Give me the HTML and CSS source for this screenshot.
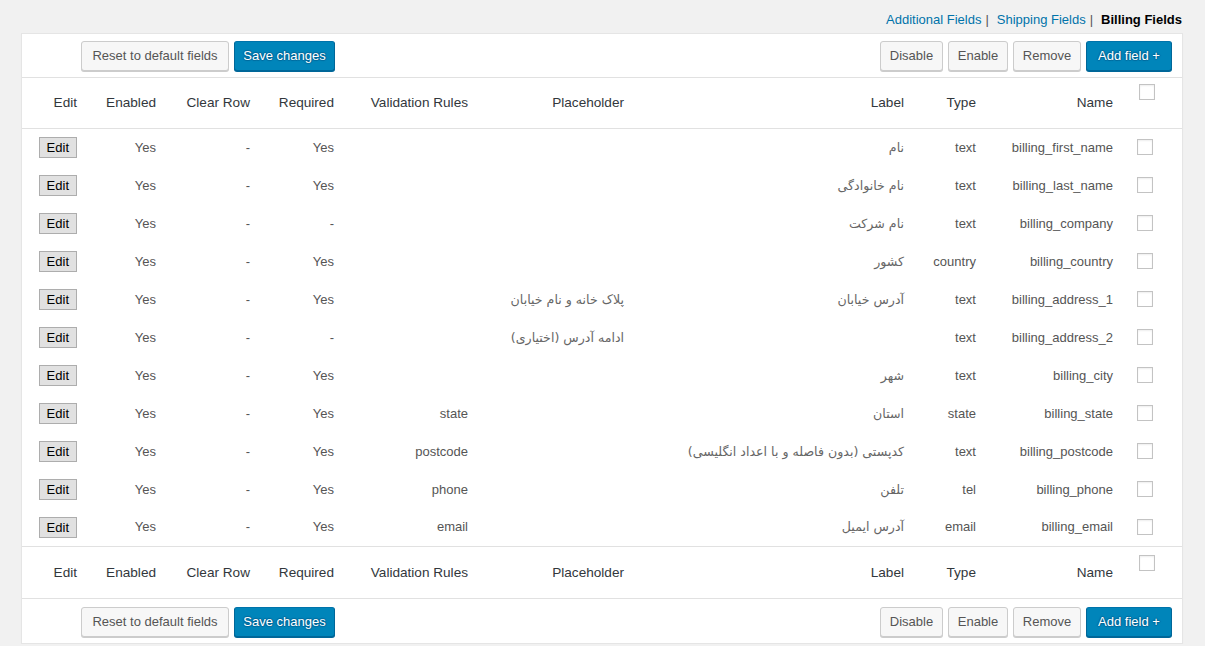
FILE: index.html
```html
<!DOCTYPE html>
<html lang="en">
<head>
<meta charset="utf-8">
<title>Billing Fields</title>
<link rel="stylesheet" href="styles.css">
</head>
<body>
<div class="tabs">
  <a class="tab" href="#">Additional Fields</a><span class="sep">|</span><a class="tab" href="#">Shipping Fields</a><span class="sep">|</span><b class="tab-current">Billing Fields</b>
</div>
<div class="panel">
  <div class="toolbar">
    <div class="group group-left">
      <button class="btn w-reset">Reset to default fields</button>
      <button class="btn btn-primary w-save">Save changes</button>
    </div>
    <div class="group group-right">
      <button class="btn w-disable">Disable</button>
      <button class="btn w-enable">Enable</button>
      <button class="btn w-remove">Remove</button>
      <button class="btn btn-primary w-add">Add field +</button>
    </div>
  </div>
  <table class="fields">
    <colgroup>
      <col class="c-edit"><col class="c-enabled"><col class="c-clear"><col class="c-req"><col class="c-valid"><col class="c-ph"><col class="c-label"><col class="c-type"><col class="c-name"><col class="c-check">
    </colgroup>
    <thead>
      <tr>
        <th>Edit</th><th>Enabled</th><th>Clear Row</th><th>Required</th><th>Validation Rules</th><th>Placeholder</th><th>Label</th><th>Type</th><th>Name</th><th class="check head-check"><input type="checkbox" class="cb"></th>
      </tr>
    </thead>
    <tbody>
      <tr><td><button class="edit">Edit</button></td><td>Yes</td><td>-</td><td>Yes</td><td></td><td></td><td class="fa" dir="rtl">نام</td><td>text</td><td>billing_first_name</td><td class="check"><input type="checkbox" class="cb"></td></tr>
      <tr><td><button class="edit">Edit</button></td><td>Yes</td><td>-</td><td>Yes</td><td></td><td></td><td class="fa" dir="rtl">نام خانوادگی</td><td>text</td><td>billing_last_name</td><td class="check"><input type="checkbox" class="cb"></td></tr>
      <tr><td><button class="edit">Edit</button></td><td>Yes</td><td>-</td><td>-</td><td></td><td></td><td class="fa" dir="rtl">نام شرکت</td><td>text</td><td>billing_company</td><td class="check"><input type="checkbox" class="cb"></td></tr>
      <tr><td><button class="edit">Edit</button></td><td>Yes</td><td>-</td><td>Yes</td><td></td><td></td><td class="fa" dir="rtl">کشور</td><td>country</td><td>billing_country</td><td class="check"><input type="checkbox" class="cb"></td></tr>
      <tr><td><button class="edit">Edit</button></td><td>Yes</td><td>-</td><td>Yes</td><td></td><td class="fa" dir="rtl">پلاک خانه و نام خیابان</td><td class="fa" dir="rtl">آدرس خیابان</td><td>text</td><td>billing_address_1</td><td class="check"><input type="checkbox" class="cb"></td></tr>
      <tr><td><button class="edit">Edit</button></td><td>Yes</td><td>-</td><td>-</td><td></td><td class="fa" dir="rtl">ادامه آدرس (اختیاری)</td><td></td><td>text</td><td>billing_address_2</td><td class="check"><input type="checkbox" class="cb"></td></tr>
      <tr><td><button class="edit">Edit</button></td><td>Yes</td><td>-</td><td>Yes</td><td></td><td></td><td class="fa" dir="rtl">شهر</td><td>text</td><td>billing_city</td><td class="check"><input type="checkbox" class="cb"></td></tr>
      <tr><td><button class="edit">Edit</button></td><td>Yes</td><td>-</td><td>Yes</td><td>state</td><td></td><td class="fa" dir="rtl">استان</td><td>state</td><td>billing_state</td><td class="check"><input type="checkbox" class="cb"></td></tr>
      <tr><td><button class="edit">Edit</button></td><td>Yes</td><td>-</td><td>Yes</td><td>postcode</td><td></td><td class="fa" dir="rtl">کدپستی (بدون فاصله و با اعداد انگلیسی)</td><td>text</td><td>billing_postcode</td><td class="check"><input type="checkbox" class="cb"></td></tr>
      <tr><td><button class="edit">Edit</button></td><td>Yes</td><td>-</td><td>Yes</td><td>phone</td><td></td><td class="fa" dir="rtl">تلفن</td><td>tel</td><td>billing_phone</td><td class="check"><input type="checkbox" class="cb"></td></tr>
      <tr><td><button class="edit">Edit</button></td><td>Yes</td><td>-</td><td>Yes</td><td>email</td><td></td><td class="fa" dir="rtl">آدرس ایمیل</td><td>email</td><td>billing_email</td><td class="check"><input type="checkbox" class="cb"></td></tr>
    </tbody>
    <tfoot>
      <tr>
        <th>Edit</th><th>Enabled</th><th>Clear Row</th><th>Required</th><th>Validation Rules</th><th>Placeholder</th><th>Label</th><th>Type</th><th>Name</th><th class="check head-check foot-check"><input type="checkbox" class="cb"></th>
      </tr>
    </tfoot>
  </table>
  <div class="toolbar toolbar-bottom">
    <div class="group group-left">
      <button class="btn w-reset">Reset to default fields</button>
      <button class="btn btn-primary w-save">Save changes</button>
    </div>
    <div class="group group-right">
      <button class="btn w-disable">Disable</button>
      <button class="btn w-enable">Enable</button>
      <button class="btn w-remove">Remove</button>
      <button class="btn btn-primary w-add">Add field +</button>
    </div>
  </div>
</div>
</body>
</html>
```

FILE: styles.css
```css
html, body {
  margin: 0;
  padding: 0;
}
body {
  background: #f1f1f1;
  font-family: "Liberation Sans", Arial, sans-serif;
  font-size: 13px;
  color: #444;
}
.tabs {
  height: 22px;
  padding: 11px 23px 0 0;
  line-height: 18px;
  text-align: right;
  font-size: 13px;
}
.tab {
  color: #0073aa;
  text-decoration: none;
}
.sep {
  color: #555;
  margin: 0 8px 0 4px;
}
.tab-current {
  color: #000;
  font-weight: bold;
}
.panel {
  margin: 0 22px 0 21px;
  background: #fff;
  border: 1px solid #e5e5e5;
  box-shadow: 0 1px 1px rgba(0,0,0,.04);
}
.toolbar {
  display: flex;
  justify-content: space-between;
  align-items: center;
  padding: 7px 10px 6px 59px;
  border-bottom: 1px solid #e1e1e1;
}
.toolbar-bottom {
  border-bottom: 0;
  padding: 8px 10px 6px 59px;
}
.group {
  display: flex;
  gap: 5px;
}
.btn {
  height: 30px;
  margin: 0;
  padding: 0 0 1px;
  font-family: "Liberation Sans", Arial, sans-serif;
  font-size: 13px;
  line-height: 28px;
  color: #555;
  background: #f7f7f7;
  border: 1px solid #ccc;
  border-radius: 3px;
  box-shadow: 0 1px 0 #ccc;
  white-space: nowrap;
  text-align: center;
  cursor: pointer;
}
.w-reset { width: 148px; }
.w-save { width: 101px; }
.w-disable { width: 63px; }
.w-enable { width: 60px; }
.w-remove { width: 68px; }
.w-add { width: 86px; }
.btn-primary {
  color: #fff;
  background: #0085ba;
  border-color: #0073aa #006799 #006799;
  box-shadow: 0 1px 0 #006799;
  text-shadow: 0 -1px 1px #006799, 1px 0 1px #006799, 0 1px 1px #006799, -1px 0 1px #006799;
}
.fields {
  width: 100%;
  table-layout: fixed;
  border-collapse: collapse;
  border-spacing: 0;
}
.c-edit { width: 65px; }
.c-enabled { width: 79px; }
.c-clear { width: 94px; }
.c-req { width: 84px; }
.c-valid { width: 134px; }
.c-ph { width: 156px; }
.c-label { width: 280px; }
.c-type { width: 72px; }
.c-name { width: 137px; }
.c-check { width: 59px; }
.fields thead tr {
  height: 50px;
}
.fields tfoot tr {
  height: 52px;
}
.fields tbody tr {
  height: 38px;
}
.fields th {
  padding: 0 10px 0 0;
  font-weight: normal;
  font-size: 13.6px;
  color: #32373c;
  text-align: right;
  vertical-align: middle;
  white-space: nowrap;
}
.fields thead th {
  border-bottom: 1px solid #e1e1e1;
}
.fields tfoot th {
  border-top: 1px solid #e1e1e1;
  border-bottom: 1px solid #e1e1e1;
}
.fields td {
  padding: 0 10px 0 0;
  color: #555;
  text-align: right;
  vertical-align: middle;
  white-space: nowrap;
  font-size: 13px;
}
.fields td.fa {
  font-family: "DejaVu Sans", "Noto Sans", sans-serif;
  font-size: 12.6px;
  color: #666;
}
.fields .check {
  text-align: left;
  padding: 0 0 0 14px;
}
.fields .head-check {
  vertical-align: top;
  padding: 6px 0 0 16px;
}
.fields .foot-check {
  padding-top: 8px;
}
.cb {
  -webkit-appearance: none;
  appearance: none;
  display: block;
  width: 16px;
  height: 16px;
  margin: 0;
  border: 1px solid #c3c3c3;
  border-radius: 0;
  background: #fff;
  box-shadow: inset 0 1px 2px rgba(0,0,0,.07);
}
.edit {
  height: 21px;
  margin: 1px 0 0;
  padding: 0 7px;
  font-family: "Liberation Sans", Arial, sans-serif;
  font-size: 13px;
  line-height: 19px;
  color: #000;
  background: #e1e1e1;
  border: 1px solid #adadad;
  border-radius: 0;
  cursor: pointer;
}
```
